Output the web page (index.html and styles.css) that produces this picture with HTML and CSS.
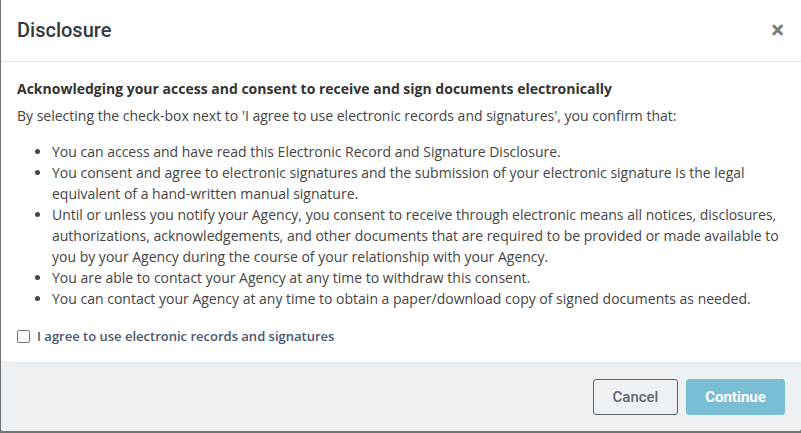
FILE: index.html
```html
<!DOCTYPE html>
<html>
<head>
<meta charset="utf-8">
<link rel="stylesheet" href="styles.css">
</head>
<body>
<div class="modal">
  <div class="modal-header">
    <h2 class="modal-title">Disclosure</h2>
    <button class="close" type="button" aria-label="Close">&times;</button>
  </div>
  <div class="modal-body">
    <p class="lead">Acknowledging your access and consent to receive and sign documents electronically</p>
    <p class="intro">By selecting the check-box next to 'I agree to use electronic records and signatures', you confirm that:</p>
    <ul class="terms">
      <li>You can access and have read this Electronic Record and Signature Disclosure.</li>
      <li>You consent and agree to electronic signatures and the submission of your electronic signature is the legal equivalent of a hand-written manual signature.</li>
      <li>Until or unless you notify your Agency, you consent to receive through electronic means all notices, disclosures, authorizations, acknowledgements, and other documents that are required to be provided or made available to you by your Agency during the course of your relationship with your Agency.</li>
      <li>You are able to contact your Agency at any time to withdraw this consent.</li>
      <li>You can contact your Agency at any time to obtain a paper/download copy of signed documents as needed.</li>
    </ul>
    <label class="agree"><span class="box"></span><span>I agree to use electronic records and signatures</span></label>
  </div>
  <div class="modal-footer">
    <button class="btn btn-cancel" type="button">Cancel</button>
    <button class="btn btn-continue" type="button">Continue</button>
  </div>
</div>
</body>
</html>
```

FILE: styles.css
```css
html, body {
  margin: 0;
  padding: 0;
}
body {
  background: #6f7478;
  width: 801px;
  height: 433px;
  overflow: hidden;
}
.modal {
  margin-left: 1px;
  width: 800px;
  height: 431px;
  background: #fff;
  border-radius: 0 0 3px 3px;
  display: flex;
  flex-direction: column;
  overflow: hidden;
}
.modal-header {
  display: flex;
  align-items: center;
  justify-content: space-between;
  padding: 15px 16px 16px 16px;
  border-bottom: 1px solid #e6e6e6;
}
.modal-title {
  margin: 0;
  font-family: Roboto, "Liberation Sans", sans-serif;
  font-weight: 500;
  font-size: 20px;
  line-height: 30px;
  color: #333a40;
}
.close {
  border: 0;
  background: none;
  padding: 0;
  font-family: Roboto, "Liberation Sans", sans-serif;
  font-size: 24px;
  font-weight: 700;
  line-height: 24px;
  color: #7a7a7a;
  margin-right: 1px;
}
.modal-body {
  padding: 16px 16px 15px 16px;
  font-family: "Open Sans", "Liberation Sans", sans-serif;
  font-size: 14px;
  line-height: 21px;
  color: #444;
  flex: 1;
}
.modal-body p {
  margin: 0;
}
.lead {
  font-weight: 700;
  color: #333;
  margin-bottom: 6px !important;
}
.intro {
  margin-bottom: 15px !important;
}
.terms {
  margin: 0 0 17px 0;
  padding-left: 35px;
}
.agree {
  display: flex;
  align-items: center;
  gap: 7px;
  font-size: 13px;
  font-weight: 600;
  color: #4a5670;
}
.box {
  width: 11px;
  height: 11px;
  border: 1px solid #767676;
  border-radius: 2px;
  background: #fff;
}
.modal-footer {
  display: flex;
  justify-content: flex-end;
  gap: 8px;
  padding: 16px 16px 16px 16px;
  background: #edf1f4;
  border-top: 1px solid #e2e5e8;
}
.btn {
  height: 36px;
  border-radius: 3px;
  font-family: Roboto, "Liberation Sans", sans-serif;
  font-size: 15px;
  font-weight: 500;
  padding: 0 16px;
}
.btn-cancel {
  width: 85px;
  background: transparent;
  border: 1px solid #5c6369;
  color: #5f6870;
}
.btn-continue {
  width: 99px;
  background: #7abed6;
  border: 1px solid #7abed6;
  color: #fff;
  font-weight: 700;
}
```
